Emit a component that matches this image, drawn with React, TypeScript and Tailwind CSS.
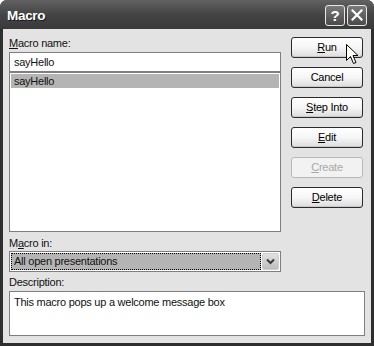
import React from "react";

function Btn({ children, disabled }: { children: React.ReactNode; disabled?: boolean }) {
  return (
    <div
      className={
        disabled
          ? "h-[21px] w-[72px] rounded-[3px] border border-[#b8b8b8] bg-[#f2f2f2] text-[#a8a8a8] flex items-center justify-center text-[11px] leading-none"
          : "h-[21px] w-[72px] rounded-[3px] border border-[#2b2b2b] bg-gradient-to-b from-white via-[#f6f6f6] to-[#dcdcdc] text-black flex items-center justify-center text-[11px] leading-none shadow-[inset_0_-1px_0_#c8c8c8]"
      }
    >
      {children}
    </div>
  );
}

export default function App() {
  return (
    <div className="w-[374px] h-[346px] bg-white font-['Liberation_Sans',Arial,sans-serif] relative">
      <div className="w-[374px] h-[346px] rounded-t-[7px] bg-[#2e2e2e] flex flex-col overflow-hidden">
        {/* Title bar */}
        <div className="h-[29px] shrink-0 flex items-center justify-between pl-[7px] pr-[7px] bg-gradient-to-b from-[#626262] via-[#444444] to-[#3a3a3a]">
          <span className="pt-[3px] text-white font-bold text-[13.5px] tracking-[-0.3px] [text-shadow:1px_1px_0_#1a1a1a]">Macro</span>
          <div className="flex gap-[2px] pt-[1px]">
            <div className="w-[20px] h-[21px] rounded-[3px] border border-[#e8e8e8] bg-gradient-to-b from-[#7a7a7a] to-[#4a4a4a] flex items-center justify-center text-white font-bold text-[15px] leading-none">
              ?
            </div>
            <div className="w-[20px] h-[21px] rounded-[3px] border border-[#e8e8e8] bg-gradient-to-b from-[#7a7a7a] to-[#4a4a4a] flex items-center justify-center">
              <svg width="12" height="12" viewBox="0 0 12 12">
                <path d="M1.5 1.5 L10.5 10.5 M10.5 1.5 L1.5 10.5" stroke="white" strokeWidth="2.2" strokeLinecap="square" />
              </svg>
            </div>
          </div>
        </div>
        {/* Body */}
        <div className="flex-1 mx-[3px] mb-[3px] bg-[#e3e3e3] pt-[7px] pl-[6px] pr-[6px] flex flex-col text-[11px] tracking-[-0.25px] text-[#111]">
          <div className="flex gap-[10px]">
            {/* Left column */}
            <div className="w-[272px] flex flex-col">
              <div className="h-[14px] leading-[14px]">
                <span className="underline underline-offset-[1px]">M</span>acro name:
              </div>
              <div className="mt-[2px] h-[20px] border border-[#7f7f7f] bg-white pl-[4px] flex items-center">sayHello</div>
              <div className="h-[160px] border border-[#7f7f7f] bg-white p-[1px]">
                <div className="h-[14px] leading-[14px] bg-[#b4b4b4] pl-[3px]">sayHello</div>
              </div>
              <div className="mt-[4px] h-[14px] leading-[14px]">
                M<span className="underline underline-offset-[1px]">a</span>cro in:
              </div>
              <div className="mt-[1px] h-[21px] border border-[#7f7f7f] bg-white p-[1px] flex gap-[1px]">
                <div className="flex-1 bg-[#b4b4b4] border border-dotted border-black pl-[2px] flex items-center">All open presentations</div>
                <div className="w-[17px] rounded-[2px] bg-gradient-to-b from-[#e2e2e2] to-[#bcbcbc] border border-[#cfcfcf] flex items-center justify-center">
                  <svg width="9" height="7" viewBox="0 0 9 7">
                    <path d="M1 1.5 L4.5 5 L8 1.5" stroke="#3a3a3a" strokeWidth="2" fill="none" />
                  </svg>
                </div>
              </div>
            </div>
            {/* Buttons */}
            <div className="mt-[1px] flex flex-col gap-[9px]">
              <Btn>
                <span className="underline underline-offset-[1px]">R</span>un
              </Btn>
              <Btn>Cancel</Btn>
              <Btn>
                <span className="underline underline-offset-[1px]">S</span>tep Into
              </Btn>
              <Btn>
                <span className="underline underline-offset-[1px]">E</span>dit
              </Btn>
              <Btn disabled>
                <span className="underline underline-offset-[1px]">C</span>reate
              </Btn>
              <Btn>
                <span className="underline underline-offset-[1px]">D</span>elete
              </Btn>
            </div>
          </div>
          <div className="mt-[3px] h-[14px] leading-[14px]">Description:</div>
          <div className="mt-[2px] h-[45px] border border-[#7f7f7f] bg-white pl-[4px] pt-[3px] leading-[14px]">
            This macro pops up a welcome message box
          </div>
        </div>
      </div>
      {/* Mouse cursor */}
      <svg className="absolute left-[346px] top-[44px]" width="13" height="21" viewBox="0 0 13 21">
        <path
          d="M0.5 0.5 L0.5 16.5 L4.5 12.5 L7.5 19.5 L10 18.5 L7 11.5 L12 11.5 Z"
          fill="white"
          stroke="black"
          strokeWidth="1"
          strokeLinejoin="miter"
        />
      </svg>
    </div>
  );
}
